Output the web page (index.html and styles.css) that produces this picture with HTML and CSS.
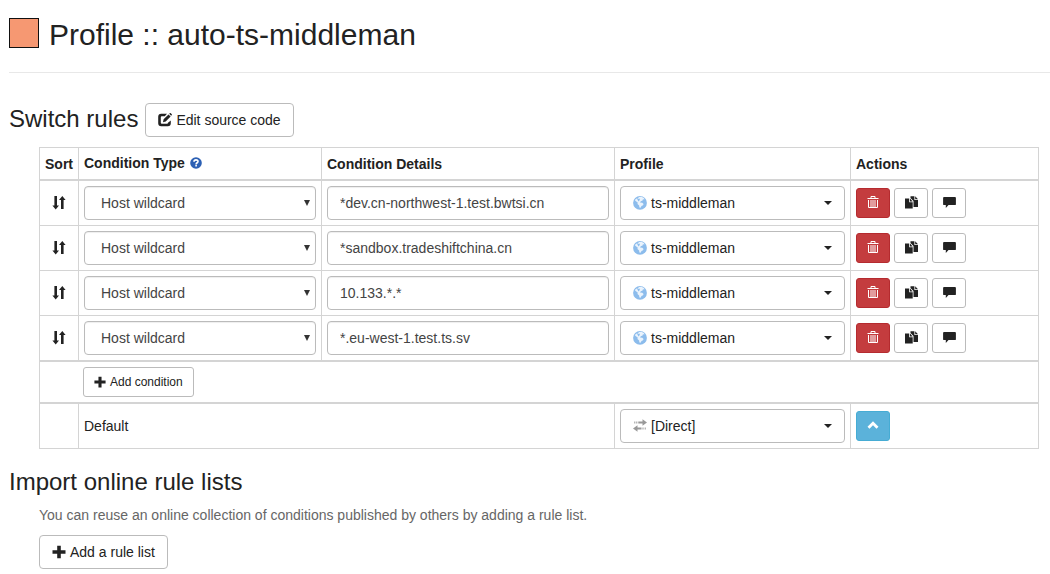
FILE: index.html
```html
<!DOCTYPE html>
<html lang="en">
<head>
<meta charset="utf-8">
<title>Profile :: auto-ts-middleman</title>
<link rel="stylesheet" href="styles.css">
</head>
<body>
<svg class="sprite" aria-hidden="true">
  <symbol id="i-edit" viewBox="0 0 14 14"><path d="M9 .7H3.200Q.2.7.2 3.700v6.600q0 3 3 3h6.600q3 0 3-3V7.500L10 9.800q0 1-1 1H3.800q-1 0-1-1V4.200q0-1 1-1h3z"/><path d="M5 9.200l.6-2.900 4.900-4.900 2.100 2.100-4.900 4.900zM11.200.8l.8-.7q.4-.2.8.1l1 1q.3.4 0 .8l-.7.8z"/></symbol>
  <symbol id="i-help" viewBox="0 0 12 12"><circle cx="6" cy="6" r="5.800"/><path d="M4 4.700C4 2.300 8 2.300 8 4.500 8 5.800 6.100 5.700 6.100 7.400M6.100 8v1.500" fill="none" stroke="#fff" stroke-width="1.600"/></symbol>
  <symbol id="i-sort" viewBox="0 0 14 14"><path d="M2.400 0h2.600v9.400h2L3.700 13.400.4 9.400h2zM9 13V4H7L10.300 0l3.300 4h-2v9z"/></symbol>
  <symbol id="i-globe" viewBox="0 0 14 14"><circle cx="7" cy="6.900" r="6.900"/><path d="M6 .9L8.500.7l2.600 1.600.3 1.300-1.500-.3-.3 1.200-1.800.7-.8 1.200 2.300.3 1.300 1.300-.6 1.300-1.500.7-.9 1.800-1.200-.3-.3-2L4.500 8 4.700 6.500 2.600 5 1.800 3.900l1.700-1.400.9.400z" fill="#eaf3fc"/><path d="M4.200 3.200l2.200-.6.5 1.200-1.300 1.600z"/></symbol>
  <symbol id="i-direct" viewBox="0 0 14 14"><path d="M5.300 2.500h4.200V.3L14 3.500 9.500 6.700V4.500H5.300zM3.300 2.500h1v2h-1zM1.300 2.500h1v2h-1zM8.500 10.500h-4v2.200L0 9.500l4.500-3.200v2.200h4zM9.500 8.500h1v2h-1zM11.700 8.500h1v2h-1z"/></symbol>
  <symbol id="i-trash" viewBox="0 0 12 14"><path d="M.5 3.500h11M4 3V1.500h4V3M1.500 5v7.500h9V5M4 5v7M6 5v7M8 5v7" fill="none" stroke="currentColor"/></symbol>
  <symbol id="i-copy" viewBox="0 0 13 13"><path d="M0 2.500h4.200v3.700h3.500v6.300H0zM5 2.500l2.700 2.900H5z"/><path d="M5.500 .3h3.900v3.700H13v7H8.500V4.900L5.500 1.900zM10.200.3L13 3.300h-2.800z"/></symbol>
  <symbol id="i-comment" viewBox="0 0 13 13"><path d="M1 1h11q.9 0 .9.900v6.300q0 .9-.9.900H5.500L2.800 12V9.100H1q-.9 0-.9-.9V1.900Q.1 1 1 1z"/></symbol>
  <symbol id="i-plus" viewBox="0 0 14 14"><path d="M5.200.8h3.600v4.500h4.700v3.400H8.800v4.600H5.200V8.700H.5V5.300h4.700z"/></symbol>
  <symbol id="i-up" viewBox="0 0 12 12"><path d="M1.500 8.700L6 4.200l4.500 4.500" fill="none" stroke="currentColor" stroke-width="2.800"/></symbol>
</svg>
<main class="page">
  <header class="page-header">
    <span class="swatch"></span>
    <h1>Profile :: auto-ts-middleman</h1>
  </header>

  <section class="rules">
    <div class="section-title">
      <h2>Switch rules</h2>
      <button class="btn" type="button"><svg class="icon"><use href="#i-edit"/></svg>Edit source code</button>
    </div>
    <div class="indent">
      <table class="rule-table">
        <colgroup><col class="col-sort"><col class="col-type"><col><col class="col-profile"><col class="col-actions"></colgroup>
        <thead>
          <tr>
            <th>Sort</th>
            <th><span class="with-help">Condition Type <a class="help" href="#help" aria-label="Help"><svg class="icon icon-sm"><use href="#i-help"/></svg></a></span></th>
            <th>Condition Details</th><th>Profile</th><th>Actions</th>
          </tr>
        </thead>
        <tbody>
          <tr>
            <td class="sort"><svg class="icon"><use href="#i-sort"/></svg></td>
            <td><div class="select"><select class="control" aria-label="Condition type"><option>Host wildcard</option></select></div></td>
            <td><input class="control" type="text" aria-label="Condition details" value="*dev.cn-northwest-1.test.bwtsi.cn"></td>
            <td><button class="btn dropdown" type="button"><svg class="icon globe"><use href="#i-globe"/></svg>ts-middleman<span class="caret"></span></button></td>
            <td><div class="actions"><button class="btn btn-sm danger" type="button" aria-label="Delete"><svg class="icon trash"><use href="#i-trash"/></svg></button><button class="btn btn-sm" type="button" aria-label="Clone"><svg class="icon glyph"><use href="#i-copy"/></svg></button><button class="btn btn-sm" type="button" aria-label="Note"><svg class="icon glyph"><use href="#i-comment"/></svg></button></div></td>
          </tr>
          <tr>
            <td class="sort"><svg class="icon"><use href="#i-sort"/></svg></td>
            <td><div class="select"><select class="control" aria-label="Condition type"><option>Host wildcard</option></select></div></td>
            <td><input class="control" type="text" aria-label="Condition details" value="*sandbox.tradeshiftchina.cn"></td>
            <td><button class="btn dropdown" type="button"><svg class="icon globe"><use href="#i-globe"/></svg>ts-middleman<span class="caret"></span></button></td>
            <td><div class="actions"><button class="btn btn-sm danger" type="button" aria-label="Delete"><svg class="icon trash"><use href="#i-trash"/></svg></button><button class="btn btn-sm" type="button" aria-label="Clone"><svg class="icon glyph"><use href="#i-copy"/></svg></button><button class="btn btn-sm" type="button" aria-label="Note"><svg class="icon glyph"><use href="#i-comment"/></svg></button></div></td>
          </tr>
          <tr>
            <td class="sort"><svg class="icon"><use href="#i-sort"/></svg></td>
            <td><div class="select"><select class="control" aria-label="Condition type"><option>Host wildcard</option></select></div></td>
            <td><input class="control" type="text" aria-label="Condition details" value="10.133.*.*"></td>
            <td><button class="btn dropdown" type="button"><svg class="icon globe"><use href="#i-globe"/></svg>ts-middleman<span class="caret"></span></button></td>
            <td><div class="actions"><button class="btn btn-sm danger" type="button" aria-label="Delete"><svg class="icon trash"><use href="#i-trash"/></svg></button><button class="btn btn-sm" type="button" aria-label="Clone"><svg class="icon glyph"><use href="#i-copy"/></svg></button><button class="btn btn-sm" type="button" aria-label="Note"><svg class="icon glyph"><use href="#i-comment"/></svg></button></div></td>
          </tr>
          <tr>
            <td class="sort"><svg class="icon"><use href="#i-sort"/></svg></td>
            <td><div class="select"><select class="control" aria-label="Condition type"><option>Host wildcard</option></select></div></td>
            <td><input class="control" type="text" aria-label="Condition details" value="*.eu-west-1.test.ts.sv"></td>
            <td><button class="btn dropdown" type="button"><svg class="icon globe"><use href="#i-globe"/></svg>ts-middleman<span class="caret"></span></button></td>
            <td><div class="actions"><button class="btn btn-sm danger" type="button" aria-label="Delete"><svg class="icon trash"><use href="#i-trash"/></svg></button><button class="btn btn-sm" type="button" aria-label="Clone"><svg class="icon glyph"><use href="#i-copy"/></svg></button><button class="btn btn-sm" type="button" aria-label="Note"><svg class="icon glyph"><use href="#i-comment"/></svg></button></div></td>
          </tr>
        </tbody>
        <tbody>
          <tr class="add-row">
            <td colspan="5"><button class="btn btn-sm" type="button"><svg class="icon icon-sm"><use href="#i-plus"/></svg>Add condition</button></td>
          </tr>
        </tbody>
        <tbody>
          <tr>
            <td></td>
            <td colspan="2">Default</td>
            <td><button class="btn dropdown" type="button"><svg class="icon direct"><use href="#i-direct"/></svg>[Direct]<span class="caret"></span></button></td>
            <td><div class="actions"><button class="btn btn-sm info" type="button" aria-label="Move up"><svg class="icon icon-sm"><use href="#i-up"/></svg></button></div></td>
          </tr>
        </tbody>
      </table>
    </div>
  </section>

  <section class="import">
    <h2>Import online rule lists</h2>
    <div class="indent">
      <p>You can reuse an online collection of conditions published by others by adding a rule list.</p>
      <button class="btn" type="button"><svg class="icon"><use href="#i-plus"/></svg>Add a rule list</button>
    </div>
  </section>
</main>
</body>
</html>
```

FILE: styles.css
```css
* { box-sizing: border-box; }

body {
  margin: 0;
  background: #fff;
  color: #222;
  font: 14px/20px "Liberation Sans", Arial, sans-serif;
}

h1, h2, p { margin: 0; }
h1 { font-size: 30px; line-height: 34px; font-weight: 400; }
h2 { font-size: 24px; line-height: 26px; font-weight: 400; }

.sprite { position: absolute; width: 0; height: 0; }

.icon { width: 14px; height: 14px; flex: none; fill: currentColor; }
.icon-sm { width: 12px; height: 12px; }

.page { padding-left: 9px; }

.page-header {
  display: flex;
  align-items: flex-start;
  gap: 10px;
  padding: 18px 0 20px;
  border-bottom: 1px solid #e8e8e8;
}
.swatch {
  width: 30px;
  height: 30px;
  border: 1px solid #111;
  background: #f69872;
}

.section-title {
  display: flex;
  align-items: flex-start;
  gap: 7px;
  padding: 30px 0 10px;
}
.section-title h2 { line-height: 32px; }

.indent { padding-left: 30px; padding-right: 11px; }

.btn {
  display: inline-flex;
  align-items: center;
  gap: 4px;
  height: 34px;
  padding: 0 12px;
  border: 1px solid #bbb;
  border-radius: 4px;
  background: #fff;
  color: #222;
  font: inherit;
}
.btn-sm {
  height: 30px;
  padding: 0 10px;
  border-radius: 3px;
  font-size: 12px;
}

.rule-table {
  width: 100%;
  table-layout: fixed;
  border-collapse: collapse;
}
.col-sort { width: 39px; }
.col-type { width: 243px; }
.col-profile { width: 236px; }
.col-actions { width: 188px; }

.rule-table th, .rule-table td {
  padding: 5px;
  border: 1px solid #d4d4d4;
  text-align: left;
  vertical-align: middle;
}
.rule-table th { padding: 6px 5px 5px; border-bottom-width: 2px; }
.rule-table tbody + tbody { border-top: 2px solid #d4d4d4; }
.rule-table tbody + tbody td { border-top-width: 2px; }

.with-help {
  display: flex;
  align-items: center;
  gap: 5px;
  padding-bottom: 2px;
  line-height: 18px;
}
.help { display: flex; color: #2c60b4; }
.rule-table .sort { text-align: center; }
.sort .icon { display: block; margin: 0 auto; }
.rule-table .add-row td { padding-left: 43px; }
.add-row .btn { display: flex; }

.control {
  display: block;
  width: 100%;
  height: 34px;
  padding: 0 12px;
  border: 1px solid #bbb;
  border-radius: 4px;
  background: #fff;
  box-shadow: inset 0 1px 1px rgba(0, 0, 0, .07);
  color: #444;
  font: inherit;
}
.select { position: relative; }
.select .control { padding: 0 16px; appearance: none; }
.select::after {
  content: "";
  position: absolute;
  top: 14px;
  right: 6px;
  border: solid transparent;
  border-width: 6px 3px 0;
  border-top-color: #333;
  pointer-events: none;
}

.dropdown { display: flex; width: 100%; }
.globe { color: #8cbcec; }
.direct { color: #999; }
.caret {
  margin-left: auto;
  border: solid transparent;
  border-width: 4px 4px 0;
  border-top-color: #222;
}

.actions { display: flex; gap: 4px; }
.actions .btn { width: 34px; justify-content: center; padding: 0 0 2px; }
.trash { width: 12px; }
.glyph { width: 13px; height: 13px; }
.danger { border-color: #b52b2f; background: #c43c3e; color: #fff; }
.info { border-color: #46acd4; background: #5bb2da; color: #fff; }

.import { padding: 20px 0 5px; }
.import p { padding: 10px 0; color: #666; }
```
